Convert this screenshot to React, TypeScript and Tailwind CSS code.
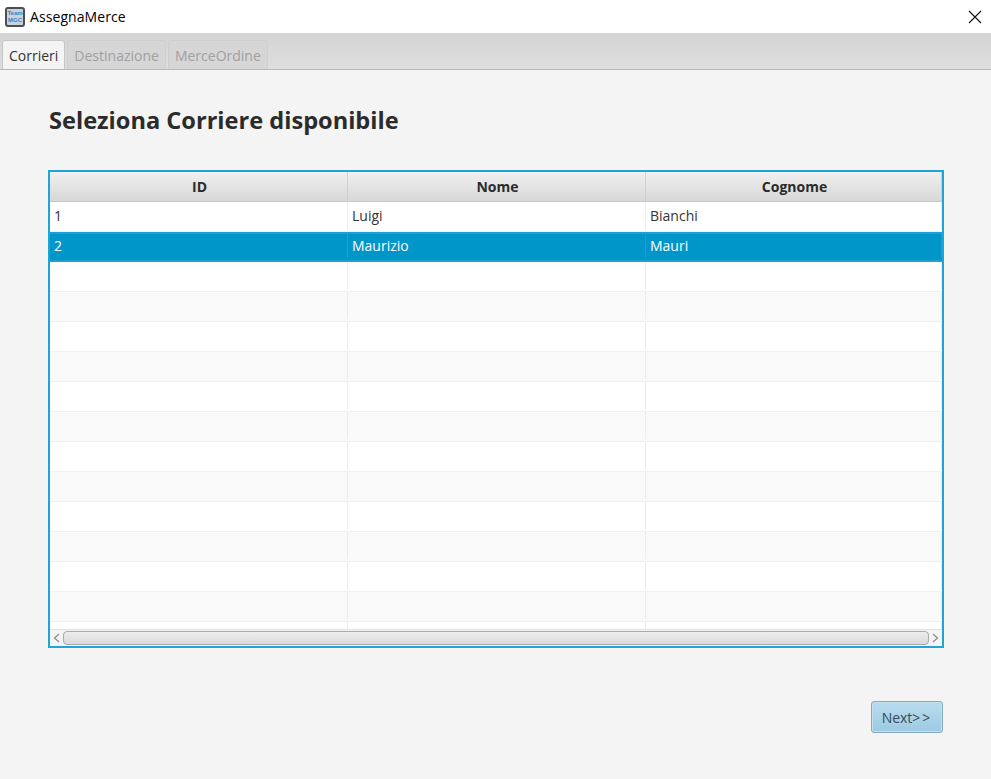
const sans = "font-['Open_Sans','Noto_Sans',sans-serif]";

const rows = [
  ["1", "Luigi", "Bianchi"],
  ["2", "Maurizio", "Mauri"],
  ...Array.from({ length: 13 }).map(() => ["", "", ""]),
];

function AppIcon() {
  return (
    <div className="flex h-[20px] w-[20px] flex-col items-center justify-center rounded-[3px] border-2 border-[#4a4f55] bg-[#c9d2da] font-['Liberation_Sans',sans-serif] text-[6px] font-bold leading-[7px] text-[#3a82c4]">
      <span>Team</span>
      <span>MGC</span>
    </div>
  );
}

function Tab({ label, active }: { label: string; active?: boolean }) {
  return (
    <div
      className={
        active
          ? "flex h-[29px] items-center rounded-t-[3px] border border-b-0 border-[#c6c6c6] bg-[#f4f4f4] px-[6px] text-[#333333]"
          : "flex h-[29px] items-center rounded-t-[3px] border border-b-0 border-[#cfcfcf] bg-[#d6d6d6] px-[6px] text-[#a0a0a0]"
      }
    >
      {label}
    </div>
  );
}

function Arrow({ left }: { left?: boolean }) {
  return (
    <div className="flex h-[17px] w-[13px] shrink-0 items-center justify-center">
      <svg width="7" height="10" viewBox="0 0 7 10" fill="none" stroke="#8a8a8a" strokeWidth="1.2">
        <path d={left ? "M6 1 L1.5 5 L6 9" : "M1 1 L5.5 5 L1 9"} />
      </svg>
    </div>
  );
}

export default function App() {
  return (
    <div className={`flex h-[779px] w-[991px] flex-col bg-[#f4f4f4] ${sans}`}>
      {/* window title */}
      <div className="flex h-[33px] shrink-0 items-center bg-white pl-[5px] pr-[9px]">
        <AppIcon />
        <span className="ml-[5px] text-[14px] tracking-[0.08px] text-black">AssegnaMerce</span>
        <svg className="ml-auto" width="14" height="14" viewBox="0 0 14 14" fill="none" stroke="#111111" strokeWidth="1.1">
          <path d="M1 1 L13 13 M13 1 L1 13" />
        </svg>
      </div>

      {/* tabs */}
      <div className="flex h-[37px] shrink-0 items-end gap-[2px] border-b border-[#b9b9b9] bg-gradient-to-b from-[#d4d4d4] to-[#dedede] pl-[2px] text-[14px]">
        <Tab label="Corrieri" active />
        <Tab label="Destinazione" />
        <Tab label="MerceOrdine" />
      </div>

      <div className="flex flex-1 flex-col pl-[48px] pr-[47px] pt-[32px]">
        <h1 className="ml-[1px] h-[36px] text-[23.6px] font-bold leading-[36px] text-[#2b2b2b]">
          Seleziona Corriere disponibile
        </h1>

        {/* table */}
        <div className="mt-[32px] flex h-[478px] flex-col border-2 border-[#1fa4da] bg-white">
          <div className="grid h-[30px] shrink-0 grid-cols-[298px_298px_296px] border-b border-[#c8c8c8] bg-gradient-to-b from-[#f0f0f0] to-[#d8d8d8] text-[14px] font-bold text-[#2b2b2b]">
            {["ID", "Nome", "Cognome"].map((h) => (
              <div key={h} className="flex items-center justify-center border-r border-[#d0d0d0] pl-[2px]">
                {h}
              </div>
            ))}
          </div>

          <div className="h-[427px] overflow-hidden">
            {rows.map((row, i) => (
              <div
                key={i}
                className={
                  i === 1
                    ? "grid h-[30px] grid-cols-[298px_298px_296px] border-y-2 border-[#1ba0d4] bg-[#0096c9] pb-[3px] text-[14px] text-white"
                    : i % 2 === 0
                      ? "grid h-[30px] grid-cols-[298px_298px_296px] border-b border-[#f0f0f0] bg-white pb-[2px] text-[14px] text-[#333333]"
                      : "grid h-[30px] grid-cols-[298px_298px_296px] border-b border-[#f0f0f0] bg-[#f9f9f9] pb-[2px] text-[14px] text-[#333333]"
                }
              >
                {row.map((cell, j) => (
                  <div
                    key={j}
                    className={
                      i === 1
                        ? "flex items-center border-r border-[#1ba0d4] px-[4px]"
                        : "flex items-center border-r border-[#ececec] px-[4px]"
                    }
                  >
                    {cell}
                  </div>
                ))}
              </div>
            ))}
          </div>

          {/* horizontal scrollbar */}
          <div className="flex h-[17px] shrink-0 items-center border-t border-[#e2e2e2] bg-[#f4f4f4]">
            <Arrow left />
            <div className="h-[14px] flex-1 rounded-[4px] border border-[#a9a9a9] bg-gradient-to-b from-[#eeeeee] to-[#d9d9d9]" />
            <Arrow />
          </div>
        </div>

        <div className="mt-[53px] flex justify-end pr-[1px]">
          <button className="h-[32px] w-[72px] rounded-[3px] border border-[#86a9bd] bg-gradient-to-b from-[#b9dcee] to-[#9ccae2] text-[14px] text-[#3a4a5a] shadow-[inset_0_0_0_1px_#c3e0ee]">
            Next<span className="tracking-[2px]">&gt;&gt;</span>
          </button>
        </div>
      </div>
    </div>
  );
}
